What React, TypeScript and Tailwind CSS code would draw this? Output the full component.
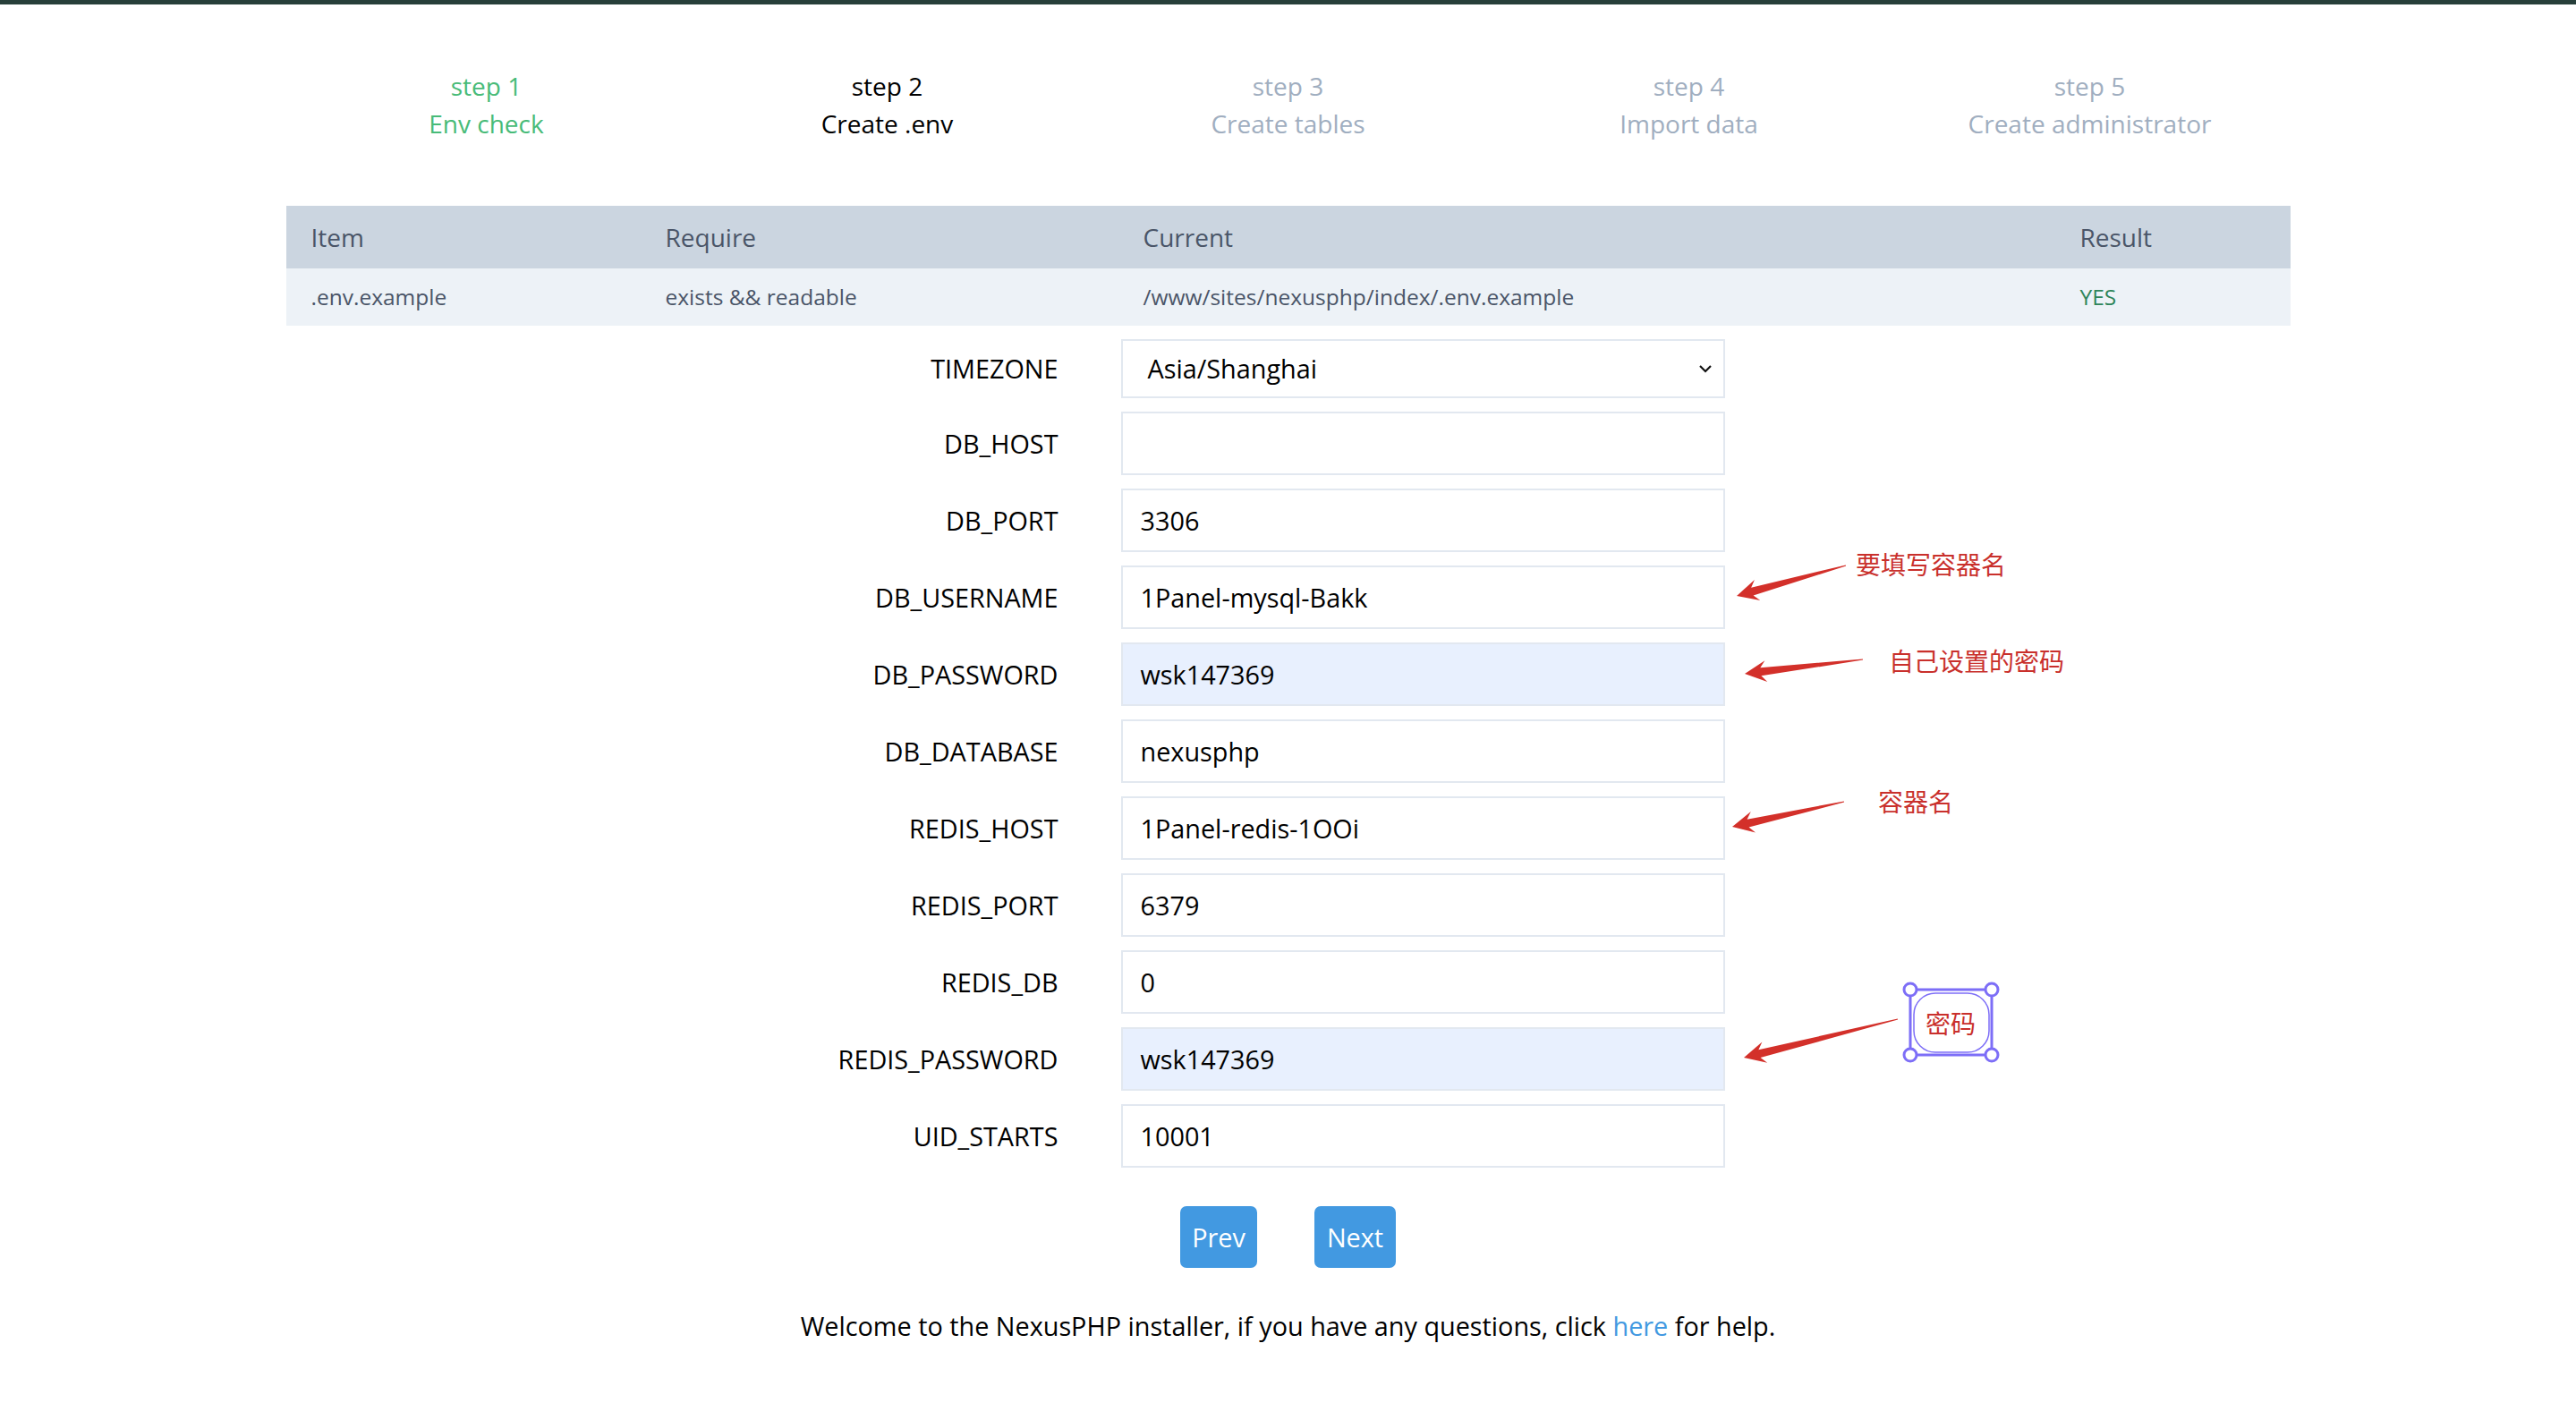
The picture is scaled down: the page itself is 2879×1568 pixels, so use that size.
import React from "react";

const FONT = { fontFamily: '"Open Sans", "Noto Sans", "Noto Sans CJK SC", sans-serif' };

function Arrow({ tail, tip }: { tail: [number, number]; tip: [number, number] }) {
  const dx = tail[0] - tip[0];
  const dy = tail[1] - tip[1];
  const len = Math.hypot(dx, dy);
  const ux = dx / len;
  const uy = dy / len;
  const nx = -uy;
  const ny = ux;
  const p = (a: number, b: number) => `${tip[0] + ux * a + nx * b},${tip[1] + uy * a + ny * b}`;
  const pts = [p(0, 0), p(24, -12), p(18, -4.5), p(len, -0.6), p(len, 0.6), p(18, 4.5), p(24, 12)].join(" ");
  return <polygon points={pts} fill="#d3302a" />;
}

const fields: { label: string; value: string; filled?: boolean }[] = [
  { label: "DB_HOST", value: "" },
  { label: "DB_PORT", value: "3306" },
  { label: "DB_USERNAME", value: "1Panel-mysql-Bakk" },
  { label: "DB_PASSWORD", value: "wsk147369", filled: true },
  { label: "DB_DATABASE", value: "nexusphp" },
  { label: "REDIS_HOST", value: "1Panel-redis-1OOi" },
  { label: "REDIS_PORT", value: "6379" },
  { label: "REDIS_DB", value: "0" },
  { label: "REDIS_PASSWORD", value: "wsk147369", filled: true },
  { label: "UID_STARTS", value: "10001" },
];

export default function App() {
  return (
    <div className="relative min-h-screen w-full bg-white text-[#1a202c]" style={FONT}>
      <div className="h-[5px] bg-[#273f3a]" />
      <div className="mx-auto w-[2240px]">
        {/* steps */}
        <div className="grid grid-cols-5 pt-[70px] text-center text-[28px] leading-[42px]">
          <div className="text-[#48bb78]">
            <div>step 1</div>
            <div>Env check</div>
          </div>
          <div className="text-black">
            <div>step 2</div>
            <div>Create .env</div>
          </div>
          <div className="text-[#a0aec0]">
            <div>step 3</div>
            <div>Create tables</div>
          </div>
          <div className="text-[#a0aec0]">
            <div>step 4</div>
            <div>Import data</div>
          </div>
          <div className="text-[#a0aec0]">
            <div>step 5</div>
            <div>Create administrator</div>
          </div>
        </div>

        {/* table */}
        <div className="mt-[71px] text-[#4a5568]">
          <div className="grid h-[70px] grid-cols-[396px_534px_1047px_263px] items-center bg-[#cbd5e0] text-[28px]">
            <div className="pl-[28px]">Item</div>
            <div className="pl-[28px]">Require</div>
            <div className="pl-[28px]">Current</div>
            <div className="pl-[28px]">Result</div>
          </div>
          <div className="grid h-[64px] grid-cols-[396px_534px_1047px_263px] items-center bg-[#edf2f7] text-[24.5px]">
            <div className="pl-[28px]">.env.example</div>
            <div className="pl-[28px]">exists &amp;&amp; readable</div>
            <div className="pl-[28px]">/www/sites/nexusphp/index/.env.example</div>
            <div className="pl-[28px] text-[#2f855a]">YES</div>
          </div>
        </div>

        {/* form */}
        <div className="mt-[15px] flex flex-col gap-[15px] text-[28.8px] text-black">
          <div className="flex items-center gap-[70px]">
            <div className="w-[863px] text-right">TIMEZONE</div>
            <div className="flex h-[66px] w-[675px] items-center justify-between border-2 border-[#e2e8f0] bg-white pl-[28px] pr-[12px]">
              <span>Asia/Shanghai</span>
              <svg width="16" height="10" viewBox="0 0 16 10">
                <polyline points="2,2 8,8 14,2" fill="none" stroke="#111" strokeWidth="2.2" />
              </svg>
            </div>
          </div>
          {fields.map((f) => (
            <div key={f.label} className="flex items-center gap-[70px]">
              <div className="w-[863px] text-right">{f.label}</div>
              <div
                className={
                  f.filled
                    ? "flex h-[71px] w-[675px] items-center border-2 border-[#e2e8f0] bg-[#e8f0fe] pl-[20px]"
                    : "flex h-[71px] w-[675px] items-center border-2 border-[#e2e8f0] bg-white pl-[20px]"
                }
              >
                {f.value}
              </div>
            </div>
          ))}
        </div>

        {/* buttons */}
        <div className="mt-[43px] flex justify-center gap-[64px]">
          <button className="h-[69px] w-[86px] rounded-[7px] bg-[#4299e1] text-[28.8px] text-white">Prev</button>
          <button className="h-[69px] w-[91px] rounded-[7px] bg-[#4299e1] text-[28.8px] text-white">Next</button>
        </div>

        <div className="mt-[45px] pb-[60px] text-center text-[28.8px] leading-[40px] text-black">
          Welcome to the NexusPHP installer, if you have any questions, click{" "}
          <span className="text-[#4299e1]">here</span> for help.
        </div>
      </div>

      {/* annotations */}
      <svg className="pointer-events-none absolute left-0 top-0" width="2879" height="1568">
        <Arrow tail={[2063, 632]} tip={[1941, 666]} />
        <Arrow tail={[2082, 737]} tip={[1950, 753]} />
        <Arrow tail={[2061, 896]} tip={[1936, 924]} />
        <Arrow tail={[2121, 1139]} tip={[1949, 1182]} />
        <rect x="2135" y="1106" width="91" height="73" fill="none" stroke="#7d6ef7" strokeWidth="3" />
        <rect x="2139" y="1110" width="84" height="66" rx="24" fill="none" stroke="#7d6ef7" strokeWidth="1.5" />
        <circle cx="2135" cy="1106" r="7" fill="white" stroke="#7d6ef7" strokeWidth="3" />
        <circle cx="2226" cy="1106" r="7" fill="white" stroke="#7d6ef7" strokeWidth="3" />
        <circle cx="2135" cy="1179" r="7" fill="white" stroke="#7d6ef7" strokeWidth="3" />
        <circle cx="2226" cy="1179" r="7" fill="white" stroke="#7d6ef7" strokeWidth="3" />
      </svg>
      <div
        className="pointer-events-none absolute left-[2074px] top-[616px] text-[28px] leading-[28px] text-[#c9302c]"
        style={{ fontFamily: '"Noto Sans CJK SC", sans-serif' }}
      >
        要填写容器名
      </div>
      <div
        className="pointer-events-none absolute left-[2111px] top-[724px] text-[28px] leading-[28px] text-[#c9302c]"
        style={{ fontFamily: '"Noto Sans CJK SC", sans-serif' }}
      >
        自己设置的密码
      </div>
      <div
        className="pointer-events-none absolute left-[2099px] top-[881px] text-[28px] leading-[28px] text-[#c9302c]"
        style={{ fontFamily: '"Noto Sans CJK SC", sans-serif' }}
      >
        容器名
      </div>
      <div
        className="pointer-events-none absolute left-[2152px] top-[1129px] text-[28px] leading-[28px] text-[#c9302c]"
        style={{ fontFamily: '"Noto Sans CJK SC", sans-serif' }}
      >
        密码
      </div>
    </div>
  );
}
